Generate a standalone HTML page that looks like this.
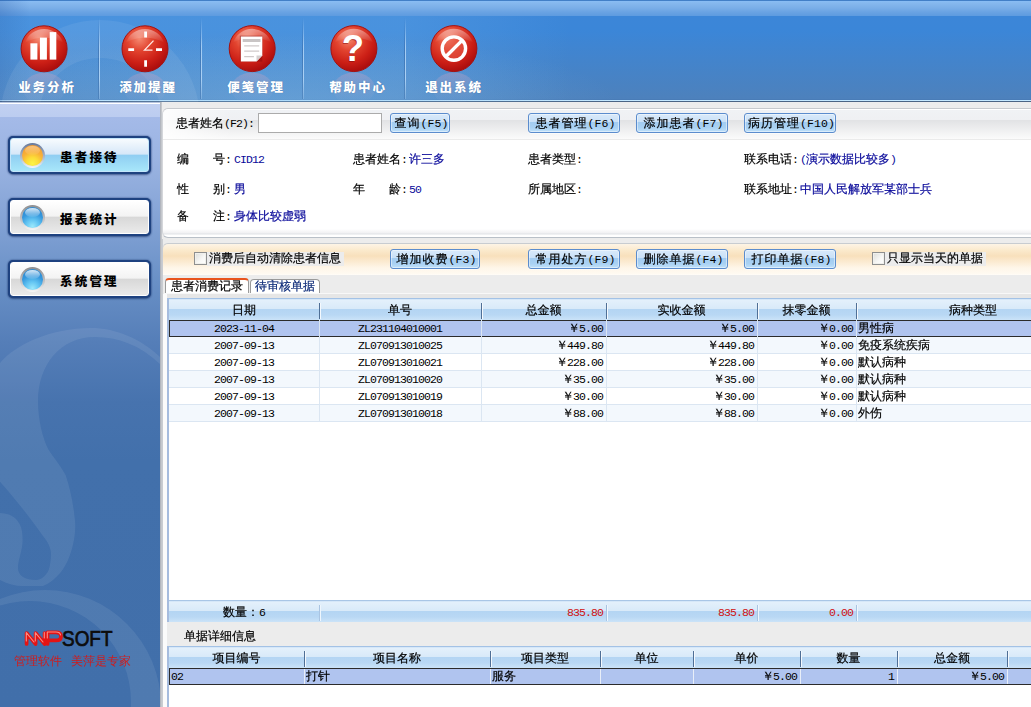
<!DOCTYPE html>
<html lang="zh-CN">
<head>
<meta charset="utf-8">
<title>美萍诊所管理系统</title>
<style>
*{box-sizing:border-box;margin:0;padding:0}
html,body{width:1031px;height:707px;overflow:hidden;background:#ececec}
body{position:relative;font-family:"Liberation Serif","WenQuanYi Zen Hei",serif;font-size:12px;line-height:14px;color:#000}
.abs{position:absolute}
/* ---------- top bar ---------- */
#top{position:absolute;left:0;top:0;width:1031px;height:102px;overflow:hidden;
 background:radial-gradient(ellipse 330px 70px at 290px 104px,rgba(125,190,240,.34),rgba(125,190,240,0)),linear-gradient(to right,rgba(130,195,245,.2) 0,rgba(130,195,245,.2) 400px,rgba(130,195,245,0) 570px) 0 16px/100% 84px no-repeat,linear-gradient(to right,rgba(30,80,160,.25) 0,rgba(30,80,160,0) 30px),linear-gradient(to bottom,#427fc7 0px,#427fc7 0.8px,#88bcf4 1.3px,#86b8ee 3px,#7aaee8 8px,#6aa3e3 12px,#5f9ce0 15.5px,#3c86d8 16.5px,#3b86d8 30px,#4384cc 60px,#4d81bc 99px,#4577b2 100px,#c4e8ff 100px,#c4e8ff 101px,#4a6484 101px,#4a6484 102px)}
.tsep{position:absolute;top:18px;width:1px;height:81px;background:linear-gradient(to bottom,rgba(190,222,252,0),rgba(190,222,252,.75) 35%,rgba(190,222,252,.8) 75%,rgba(190,222,252,.25));}
.tsep:after{content:"";position:absolute;left:-1px;top:0;width:1px;height:100%;background:linear-gradient(to bottom,rgba(20,60,120,0),rgba(20,60,120,.3) 40%,rgba(20,60,120,.2))}
.tbtn{position:absolute;top:0;width:100px;height:100px}
.tbtn svg{position:absolute;left:0;top:0}
.tlab{position:absolute;top:81px;width:120px;text-align:center;color:#fff;font-family:"Liberation Sans","Noto Sans CJK SC",sans-serif;font-weight:900;font-size:12.5px;letter-spacing:1.9px;line-height:14px;text-shadow:0 0 1px rgba(30,70,130,.6)}
/* ---------- sidebar ---------- */
#side{position:absolute;left:0;top:102px;width:160px;height:605px;overflow:hidden;
 background:linear-gradient(to bottom,#8fa3c8 0,#dfe6f5 1px,#ffffff 1.2px,#ffffff 2px,#c1d0f1 2.3px,#bccdf0 14.5px,#a4bae8 15.5px,#9ab3e1 60px,#82a2d5 120px,#6990c6 180px,#557eb8 240px,#4773ae 300px,#4270ab 360px,#416faa 605px)}
#sideedge{position:absolute;left:160px;top:102px;width:2px;height:605px;background:linear-gradient(to right,#b2b6be 0,#b2b6be 1px,#c5c8cd 1px)}
#sideedge2{position:absolute;left:162px;top:239px;width:1px;height:470px;background:#c9ccd1;z-index:5}
.sbtn{position:absolute;left:8px;width:143px;height:38px;border-radius:5px;background:#1e4280;box-shadow:0 0 2px rgba(16,44,100,.75),0 1px 2px rgba(10,30,80,.4)}
.sbtn i{position:absolute;left:2px;top:2px;right:2px;bottom:2px;border-radius:3px;border:1px solid #fff;
 background:linear-gradient(to bottom,#ffffff 0,#f3f3f3 47%,#d8d8d8 51%,#eaeaea 100%)}
.sbtn.on i{border-color:#c4e6fa;background:linear-gradient(to bottom,#f7fbfe 0,#d6e7f8 47%,#90cef2 51%,#9bdaf6 75%,#a8e6fa 100%)}
.sbtn b{position:absolute;left:52px;top:13.5px;width:70px;font-family:"Liberation Sans","Noto Sans CJK SC",sans-serif;font-weight:900;font-size:12.5px;letter-spacing:2.2px;line-height:16px;white-space:nowrap}
.ball{position:absolute;left:12px;top:7px;width:25px;height:25px;border-radius:50%;background:linear-gradient(to bottom,#66789a,#b8c2d2 65%,#f4f6fa)}
.ball.bl{background:linear-gradient(to bottom,#8e8e90,#c4c4c6 60%,#f6f6f6)}
.ball:after{content:"";position:absolute;left:2px;top:2px;width:21px;height:21px;border-radius:50%}
.ball.or:after{background:radial-gradient(circle at 50% 88%,#fcf446 0,#fcdc38 28%,#f8b038 55%,#f09430 100%)}
.ball.bl:after{background:radial-gradient(circle at 50% 92%,#9ae8fc 0,#62c4f2 30%,#3496dc 60%,#2a86d0 100%)}
.ball:before{content:"";position:absolute;left:5px;top:3px;width:15px;height:9px;border-radius:50%;background:linear-gradient(to bottom,rgba(255,255,255,.8),rgba(255,255,255,.08));z-index:2}
.ball.or:before{background:linear-gradient(to bottom,rgba(255,240,220,.45),rgba(255,240,220,.05))}
/* ---------- main ---------- */
#main{position:absolute;left:162px;top:102px;width:869px;height:605px;background:#ececec;overflow:hidden}
.lbl{position:absolute;white-space:nowrap;line-height:14px;height:14px}
#main{-webkit-text-stroke:0.2px currentColor}
.val{color:#0a0a9a}
.btn{position:absolute;height:20px;top:11px;border:1px solid #5b8ccd;border-radius:3px;text-align:center;line-height:18px;letter-spacing:1px;white-space:nowrap;
 background:linear-gradient(to bottom,#d9eafa 0,#c9e0f7 45%,#a3ccf1 47%,#a9d1f3 75%,#bfe0f9 100%);box-shadow:inset 0 0 0 1px rgba(255,255,255,.45),0 1px 0 rgba(255,255,255,.6)}
.chk{position:absolute;width:13px;height:13px;border:1px solid #8e8f8f;background:linear-gradient(135deg,#dcdcd8,#f8f8f6 60%,#fff);box-shadow:inset 0 0 0 1px #f0f0ec}
/* grid */
.grid{position:absolute;left:7px;overflow:hidden;background:#fff}
.gh{position:absolute;left:0;top:0;height:21px;width:100%;background:linear-gradient(to bottom,#cfe3f7 0,#e3f0fb 1.5px,#d9eaf9 9.5px,#b4d5f3 10.5px,#b9d8f4 16px,#cbe3f8 21px)}
.gh>span{position:absolute;top:4px;text-align:center;line-height:14px}
.gh em{position:absolute;top:4px;width:2px;height:16px;background:linear-gradient(to right,#4f6f96 0,#4f6f96 50%,#f4f9fe 50%)}
.row{position:absolute;left:0;width:100%;height:17px;border-bottom:1px solid #dbe6f2}
.row.alt{background:#f3f8fd}
.row.sel{background:#b0c4ef;border-top:1px solid #2b2b2b;border-bottom:1px solid #2b2b2b;border-left:1px solid #2b2b2b}
.row>span{position:absolute;top:1px;line-height:14px;white-space:nowrap}
.row.sel>span{top:0}
.vl{position:absolute;width:1px;background:#dbe6f2}
.h{font-family:"Liberation Mono",monospace;font-size:11.5px;letter-spacing:-0.9px;-webkit-text-stroke:0}
.btn{padding-left:3px}
.btn .h{letter-spacing:.1px}
.y{font-weight:bold;margin-right:-1px}
.r{text-align:right}.c{text-align:center}
</style>
</head>
<body>
<div id="top">
<svg class="abs" style="left:0;top:0" width="1031" height="102" viewBox="0 0 1031 102">
 <defs>
  <radialGradient id="rg" cx="38%" cy="28%" r="75%">
   <stop offset="0" stop-color="#f58a72"/><stop offset=".35" stop-color="#e2442f"/><stop offset=".7" stop-color="#cc1f16"/><stop offset="1" stop-color="#a80c0c"/>
  </radialGradient>
  <linearGradient id="gl" x1="0" y1="0" x2="0" y2="1"><stop offset="0" stop-color="#fff" stop-opacity=".45"/><stop offset="1" stop-color="#fff" stop-opacity="0"/></linearGradient>
  <linearGradient id="rf" x1="0" y1="0" x2="0" y2="1"><stop offset="0" stop-color="#c8a0c0" stop-opacity=".38"/><stop offset="1" stop-color="#9ab0d8" stop-opacity="0"/></linearGradient>
  </defs>
 <!-- decorative swirls -->
 <g fill="none" stroke="#fff" stroke-opacity=".07">
  <circle cx="100" cy="120" r="81" stroke-width="38"/>
 </g>
 <g transform="translate(44.1,48.8)"><g><ellipse cx="0" cy="40" rx="21" ry="16" fill="url(#rf)"/>
   <circle cx="0" cy="0" r="23" fill="url(#rg)" stroke="#a31212" stroke-width="1"/>
   <path d="M-19,-6 A20,20 0 0 1 19,-6 A30,22 0 0 0 -19,-6Z" fill="url(#gl)"/></g>
  <rect x="-13.7" y="-5.5" width="7" height="16.3" fill="#fff"/><rect x="-4.2" y="-11.2" width="7" height="22" fill="#fff"/><rect x="5.6" y="-16.7" width="6.6" height="27.5" fill="#fff"/>
 </g>
 <g transform="translate(145,48.8)"><g><ellipse cx="0" cy="40" rx="21" ry="16" fill="url(#rf)"/>
   <circle cx="0" cy="0" r="23" fill="url(#rg)" stroke="#a31212" stroke-width="1"/>
   <path d="M-19,-6 A20,20 0 0 1 19,-6 A30,22 0 0 0 -19,-6Z" fill="url(#gl)"/></g>
  <g stroke="#fff" stroke-width="2.8" stroke-linecap="butt"><path d="M0.6,-17.2V-11.4M0.6,11.5V17.9M-16.7,0.8H-10.9M11,0.8H17"/></g>
  <path d="M8.5,-8.2L-0.5,1.3H7.5" fill="none" stroke="#ffe8e4" stroke-width="1.3"/>
 </g>
 <g transform="translate(252.2,48.6)"><g><ellipse cx="0" cy="40" rx="21" ry="16" fill="url(#rf)"/>
   <circle cx="0" cy="0" r="23" fill="url(#rg)" stroke="#a31212" stroke-width="1"/>
   <path d="M-19,-6 A20,20 0 0 1 19,-6 A30,22 0 0 0 -19,-6Z" fill="url(#gl)"/></g>
  <path d="M-12.4,-12.9H10.1V13H-12.4Z" fill="#8a0c0c" opacity=".55"/>
  <path d="M-11.4,-12.1H10.1V7L4.3,12.8H-11.4Z" fill="#fff"/><path d="M10.1,7H4.3V12.8Z" fill="#d4d0d0"/>
  <path d="M-9.5,-9.6H8.3V-6.6H-9.5Z" fill="#c9c5c5"/>
  <g stroke="#cfcaca" stroke-width="1.3"><path d="M-8,-2.8H7M-8,2.6H7M-8,8H1.7"/></g>
 </g>
 <g transform="translate(353.9,48.6)"><g><ellipse cx="0" cy="40" rx="21" ry="16" fill="url(#rf)"/>
   <circle cx="0" cy="0" r="23" fill="url(#rg)" stroke="#a31212" stroke-width="1"/>
   <path d="M-19,-6 A20,20 0 0 1 19,-6 A30,22 0 0 0 -19,-6Z" fill="url(#gl)"/></g>
  <text x="-1" y="12.7" text-anchor="middle" font-family="Liberation Sans, sans-serif" font-weight="bold" font-size="36.5" fill="#7c0a0a" opacity=".5" transform="translate(-.8,.8)">?</text>
  <text x="-1" y="12.7" text-anchor="middle" font-family="Liberation Sans, sans-serif" font-weight="bold" font-size="36.5" fill="#fff">?</text>
 </g>
 <g transform="translate(453.9,48.6)"><g><ellipse cx="0" cy="40" rx="21" ry="16" fill="url(#rf)"/>
   <circle cx="0" cy="0" r="23" fill="url(#rg)" stroke="#a31212" stroke-width="1"/>
   <path d="M-19,-6 A20,20 0 0 1 19,-6 A30,22 0 0 0 -19,-6Z" fill="url(#gl)"/></g>
  <circle cx="0" cy="0" r="11.7" fill="#e65a48" fill-opacity=".5" stroke="#fff" stroke-width="3.4"/><path d="M8.2,-8.2L-8.2,8.2" stroke="#fff" stroke-width="3.4"/>
 </g>
</svg>
<div class="tsep" style="left:99px"></div><div class="tsep" style="left:201px"></div><div class="tsep" style="left:303px"></div><div class="tsep" style="left:405px"></div>
<div class="tlab" style="left:-13px">业务分析</div>
<div class="tlab" style="left:88px">添加提醒</div>
<div class="tlab" style="left:196px">便笺管理</div>
<div class="tlab" style="left:298px">帮助中心</div>
<div class="tlab" style="left:394px">退出系统</div>
</div>
<div id="side">
<svg class="abs" style="left:0;top:0" width="160" height="605" viewBox="0 102 160 605">
 <g fill="#fff" fill-opacity=".08" fill-rule="evenodd">
  <path d="M160,357 C140,338 115,328 91,328 C50,328 15,345 0,363 L0,580 C8,584 15,586 22.6,586 L43,586 C50,583 56,578 61,572 C67,564 70,556 72.4,547 C75,537 76,527 74.7,518 C73,502 70,488 65.6,475 C60,465 54,458 48.7,450 C43,440 38,420 38,401 C38,365 60,337 95,337 C118,337 140,345 160,364 Z M0,481.7 C15,498 30,518 43,536 C48,542 51,548 51,554 C51,560 50,566 48.7,570 C46,576 41,580 36,580 C31,580 26,579 22.6,576.8 C19,574 18,571 18,567.7 C18,560 22.6,550 22.6,540.5 C22.6,534 22,529 20,524.7 C17,519 13,516 9,514.5 C6,513.5 3,513 0,513 Z"/>
  <path d="M-71,706 A116,116 0 1 1 161,706 A116,116 0 1 1 -71,706 Z M-71,702 A101,101 0 1 0 131,702 A101,101 0 1 0 -71,702 Z"/>
 </g>
</svg>
<div class="sbtn on" style="top:34px"><i></i><span class="ball or"></span><b>患者接待</b></div>
<div class="sbtn" style="top:96px"><i></i><span class="ball bl"></span><b>报表统计</b></div>
<div class="sbtn" style="top:158px"><i></i><span class="ball bl"></span><b>系统管理</b></div>
<svg class="abs" style="left:20px;top:524px" width="100" height="24" viewBox="0 0 100 24">
 <g fill="none" stroke="#e41414" stroke-width="3.7" stroke-linejoin="round" stroke-linecap="round"><path d="M6.6,18V7L15.6,18V7L24.6,18V7"/><path d="M27.6,18V6.4H36Q41,6.4 41,10.4Q41,14.4 36,14.4H30"/></g>
 <g fill="none" stroke="#ff9a90" stroke-width="1.1" stroke-linejoin="round" stroke-linecap="round" opacity=".9"><path d="M6.3,15V6.6L14,16M15.3,15V6.6L23,16M24.3,12V6.6"/><path d="M27.3,12V6H36Q40,6 40.6,9"/></g>
 <text x="42" y="19.8" font-family="Liberation Sans, sans-serif" font-weight="normal" font-size="21.5" textLength="50.5" lengthAdjust="spacingAndGlyphs" fill="#0c0c0c" stroke="#0c0c0c" stroke-width=".7">SOFT</text>
</svg>
<div class="lbl" style="left:14px;top:552px;color:#d01c1c;font-size:12px">管理软件<span style="display:inline-block;width:9px"></span>美萍是专家</div>
</div>
<div id="sideedge"></div><div id="sideedge2"></div>
<div id="main"><div class="abs" style="left:0px;top:6px;width:900px;height:130px;background:linear-gradient(to bottom,#fff 0,#fff 120px,#f1f1f3 124px,#dfe2e6 125px,#ffffff 126px);border:1px solid #c6c9cd;border-right:0;border-left-color:#d4d6da;border-bottom-color:#b9c0c8;border-radius:6px 0 0 6px"></div><div class="abs" style="left:1px;top:8px;width:900px;height:30px;border-radius:5px 0 0 0;background:linear-gradient(to right,rgba(255,255,255,.9) 0,rgba(255,255,255,0) 70px),linear-gradient(to bottom,#f0f2f5 0,#eff0f3 9.5px,#e2e3e5 10.5px,#fbfbfb 29px);border-bottom:1px solid #ebebeb"></div><div class="lbl " style="left:14px;top:14px;">患者姓名<span class="h">(F2):</span></div><div class="abs" style="left:96px;top:11px;width:124px;height:20px;background:#fff;border:1px solid #ababab"></div><div class="btn" style="left:228px;top:11px;width:60px;height:20px;line-height:18px">查询<span class="h">(F5)</span></div><div class="btn" style="left:366px;top:11px;width:92px;height:20px;line-height:18px">患者管理<span class="h">(F6)</span></div><div class="btn" style="left:474px;top:11px;width:92px;height:20px;line-height:18px">添加患者<span class="h">(F7)</span></div><div class="btn" style="left:582px;top:11px;width:92px;height:20px;line-height:18px">病历管理<span class="h">(F10)</span></div><div class="lbl " style="left:15px;top:50px;">编　　号<span class="h">:</span></div><div class="lbl val" style="left:72px;top:50px;"><span class="h">CID12</span></div><div class="lbl " style="left:15px;top:80px;">性　　别<span class="h">:</span></div><div class="lbl val" style="left:72px;top:80px;">男</div><div class="lbl " style="left:15px;top:107px;">备　　注<span class="h">:</span></div><div class="lbl val" style="left:72px;top:107px;">身体比较虚弱</div><div class="lbl " style="left:191px;top:50px;">患者姓名<span class="h">:</span></div><div class="lbl val" style="left:247px;top:50px;">许三多</div><div class="lbl " style="left:191px;top:80px;">年　　龄<span class="h">:</span></div><div class="lbl val" style="left:247px;top:80px;"><span class="h">50</span></div><div class="lbl " style="left:366px;top:50px;">患者类型<span class="h">:</span></div><div class="lbl " style="left:366px;top:80px;">所属地区<span class="h">:</span></div><div class="lbl " style="left:582px;top:50px;">联系电话<span class="h">:</span></div><div class="lbl val" style="left:638px;top:50px;"><span class="h">(</span>演示数据比较多<span class="h">)</span></div><div class="lbl " style="left:582px;top:80px;">联系地址<span class="h">:</span></div><div class="lbl val" style="left:638px;top:80px;">中国人民解放军某部士兵</div><div class="abs" style="left:0px;top:141px;width:900px;height:60px;border:1px solid #c8ccd0;border-right:0;border-bottom:0;border-left-color:#d8dade;border-radius:6px 0 0 0;background:linear-gradient(to bottom,#fdf4e6 0,#fbeacd 6px,#f8e0bc 12px,#fbebd2 18px,#fef6e9 24px,#fffaf2 30px,#fffdf9 31px,#ececec 31px)"></div><div class="abs" style="left:45px;top:150px;width:137px;height:14px;background:#ececec"></div><div class="chk" style="left:32px;top:150px"></div><div class="lbl " style="left:47px;top:149px;">消费后自动清除患者信息</div><div class="btn" style="left:228px;top:147px;width:90px;height:20px;line-height:18px">增加收费<span class="h">(F3)</span></div><div class="btn" style="left:366px;top:147px;width:92px;height:20px;line-height:18px">常用处方<span class="h">(F9)</span></div><div class="btn" style="left:474px;top:147px;width:92px;height:20px;line-height:18px">删除单据<span class="h">(F4)</span></div><div class="btn" style="left:582px;top:147px;width:92px;height:20px;line-height:18px">打印单据<span class="h">(F8)</span></div><div class="abs" style="left:723px;top:150px;width:101px;height:14px;background:#ececec"></div><div class="chk" style="left:710px;top:150px"></div><div class="lbl " style="left:725px;top:149px;">只显示当天的单据</div><div class="abs" style="left:2px;top:191px;width:900px;height:6px;background:#e6e6e6;border-top:1px solid #f8f8f8"></div><div class="abs" style="left:3px;top:176px;width:84px;height:15px;background:#fff;border:1px solid #9a9a9a;border-bottom:0;border-top:2px solid #e8541e;border-radius:4px 4px 0 0"></div><div class="abs" style="left:88px;top:177px;width:70px;height:14px;background:#fff;border:1px solid #9a9a9a;border-bottom:0;border-radius:4px 4px 0 0"></div><div class="lbl " style="left:9px;top:177px;">患者消费记录</div><div class="lbl " style="left:93px;top:177px;color:#0c2a78">待审核单据</div><div class="grid" style="left:5px;top:196px;width:900px;height:324px;border-top:1px solid #a3c2e6;border-left:2px solid #a6bcde"><div class="gh"><span style="left:0px;width:150px">日期</span><span style="left:150px;width:162px">单号</span><em style="left:150px"></em><span style="left:312px;width:125px">总金额</span><em style="left:312px"></em><span style="left:437px;width:151px">实收金额</span><em style="left:437px"></em><span style="left:588px;width:99px">抹零金额</span><em style="left:588px"></em><span style="left:687px;width:234px">病种类型</span><em style="left:687px"></em></div><div class="row sel" style="top:21px"><span class="c" style="left:-1px;width:150px"><span class="h">2023-11-04</span></span><span class="c" style="left:149px;width:162px"><span class="h">ZL231104010001</span></span><span class="r" style="left:311px;width:122px"><b class="y">￥</b><span class="h">5.00</span></span><span class="r" style="left:436px;width:148px"><b class="y">￥</b><span class="h">5.00</span></span><span class="r" style="left:587px;width:96px"><b class="y">￥</b><span class="h">0.00</span></span><span style="left:688px">男性病</span></div><div class="row alt" style="top:38px"><span class="c" style="left:0px;width:150px"><span class="h">2007-09-13</span></span><span class="c" style="left:150px;width:162px"><span class="h">ZL070913010025</span></span><span class="r" style="left:312px;width:122px"><b class="y">￥</b><span class="h">449.80</span></span><span class="r" style="left:437px;width:148px"><b class="y">￥</b><span class="h">449.80</span></span><span class="r" style="left:588px;width:96px"><b class="y">￥</b><span class="h">0.00</span></span><span style="left:689px">免疫系统疾病</span></div><div class="row" style="top:55px"><span class="c" style="left:0px;width:150px"><span class="h">2007-09-13</span></span><span class="c" style="left:150px;width:162px"><span class="h">ZL070913010021</span></span><span class="r" style="left:312px;width:122px"><b class="y">￥</b><span class="h">228.00</span></span><span class="r" style="left:437px;width:148px"><b class="y">￥</b><span class="h">228.00</span></span><span class="r" style="left:588px;width:96px"><b class="y">￥</b><span class="h">0.00</span></span><span style="left:689px">默认病种</span></div><div class="row alt" style="top:72px"><span class="c" style="left:0px;width:150px"><span class="h">2007-09-13</span></span><span class="c" style="left:150px;width:162px"><span class="h">ZL070913010020</span></span><span class="r" style="left:312px;width:122px"><b class="y">￥</b><span class="h">35.00</span></span><span class="r" style="left:437px;width:148px"><b class="y">￥</b><span class="h">35.00</span></span><span class="r" style="left:588px;width:96px"><b class="y">￥</b><span class="h">0.00</span></span><span style="left:689px">默认病种</span></div><div class="row" style="top:89px"><span class="c" style="left:0px;width:150px"><span class="h">2007-09-13</span></span><span class="c" style="left:150px;width:162px"><span class="h">ZL070913010019</span></span><span class="r" style="left:312px;width:122px"><b class="y">￥</b><span class="h">30.00</span></span><span class="r" style="left:437px;width:148px"><b class="y">￥</b><span class="h">30.00</span></span><span class="r" style="left:588px;width:96px"><b class="y">￥</b><span class="h">0.00</span></span><span style="left:689px">默认病种</span></div><div class="row alt" style="top:106px"><span class="c" style="left:0px;width:150px"><span class="h">2007-09-13</span></span><span class="c" style="left:150px;width:162px"><span class="h">ZL070913010018</span></span><span class="r" style="left:312px;width:122px"><b class="y">￥</b><span class="h">88.00</span></span><span class="r" style="left:437px;width:148px"><b class="y">￥</b><span class="h">88.00</span></span><span class="r" style="left:588px;width:96px"><b class="y">￥</b><span class="h">0.00</span></span><span style="left:689px">外伤</span></div><div class="vl" style="left:150px;top:21px;height:102px"></div><div class="vl" style="left:312px;top:21px;height:102px"></div><div class="vl" style="left:437px;top:21px;height:102px"></div><div class="vl" style="left:588px;top:21px;height:102px"></div><div class="vl" style="left:687px;top:21px;height:102px"></div><div class="gh" style="top:301px;height:22px;border-top:1px solid #a9c6e6"><span style="left:0;width:150px;letter-spacing:0">数量：<span class="h">6</span></span><span class="r" style="left:337px;width:97px;text-align:right;color:#d01010"><span class="h">835.80</span></span><span class="r" style="left:488px;width:97px;text-align:right;color:#d01010"><span class="h">835.80</span></span><span class="r" style="left:587px;width:97px;text-align:right;color:#d01010"><span class="h">0.00</span></span><em style="left:150px;background:linear-gradient(to right,#a9c4e2 0,#a9c4e2 50%,#eef6fd 50%)"></em><em style="left:437px;background:linear-gradient(to right,#a9c4e2 0,#a9c4e2 50%,#eef6fd 50%)"></em><em style="left:588px;background:linear-gradient(to right,#a9c4e2 0,#a9c4e2 50%,#eef6fd 50%)"></em><em style="left:687px;background:linear-gradient(to right,#a9c4e2 0,#a9c4e2 50%,#eef6fd 50%)"></em></div></div><div class="lbl " style="left:22px;top:527px;">单据详细信息</div><div class="grid" style="left:5px;top:544px;width:900px;height:70px;border-top:1px solid #a3c2e6;border-left:2px solid #a6bcde"><div class="gh"><span style="left:0px;width:135px">项目编号</span><span style="left:135px;width:186px">项目名称</span><em style="left:135px"></em><span style="left:321px;width:110px">项目类型</span><em style="left:321px"></em><span style="left:431px;width:93px">单位</span><em style="left:431px"></em><span style="left:524px;width:107px">单价</span><em style="left:524px"></em><span style="left:631px;width:97px">数量</span><em style="left:631px"></em><span style="left:728px;width:110px">总金额</span><em style="left:728px"></em><span style="left:838px;width:93px"></span><em style="left:838px"></em></div><div class="row sel" style="top:21px"><span style="left:1px"><span class="h">02</span></span><span style="left:136px">打针</span><span style="left:322px">服务</span><span style="left:432px"></span><span class="r" style="left:523px;width:104px"><b class="y">￥</b><span class="h">5.00</span></span><span class="r" style="left:630px;width:94px"><span class="h">1</span></span><span class="r" style="left:727px;width:107px"><b class="y">￥</b><span class="h">5.00</span></span><span style="left:839px"></span></div><div class="vl" style="left:135px;top:22px;height:15px;background:#e8eef8"></div><div class="vl" style="left:321px;top:22px;height:15px;background:#e8eef8"></div><div class="vl" style="left:431px;top:22px;height:15px;background:#e8eef8"></div><div class="vl" style="left:524px;top:22px;height:15px;background:#e8eef8"></div><div class="vl" style="left:631px;top:22px;height:15px;background:#e8eef8"></div><div class="vl" style="left:728px;top:22px;height:15px;background:#e8eef8"></div><div class="vl" style="left:838px;top:22px;height:15px;background:#e8eef8"></div></div><div class="abs" style="left:1px;top:192px;width:4px;height:420px;background:#fbfbfb"></div></div>
</body>
</html>
